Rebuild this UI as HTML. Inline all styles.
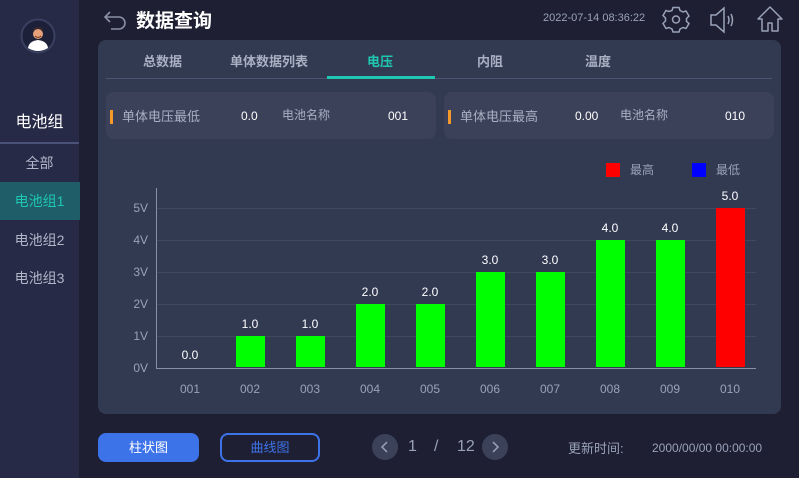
<!DOCTYPE html>
<html><head><meta charset="utf-8"><style>
*{margin:0;padding:0;box-sizing:border-box}
body{width:799px;height:478px;background:#1e1f33;font-family:"Liberation Sans","Noto Sans CJK SC",sans-serif;position:relative;overflow:hidden;color:#a9b0c4}
.a{position:absolute;white-space:nowrap}
.side{position:absolute;left:0;top:0;width:79px;height:478px;background:#262a47}
.panel{position:absolute;left:98px;top:40px;width:683px;height:374px;background:#323a52;border-radius:8px}
.card{position:absolute;top:92px;height:47px;background:#3b4159;border-radius:8px}
.grid{position:absolute;left:157px;width:599px;height:1px;background:#3f4762}
.bar{position:absolute;width:29px;background:#00ff00}
.val{position:absolute;width:60px;text-align:center;color:#fff;font-size:12px}
.xl{position:absolute;width:60px;text-align:center;font-size:12px;color:#9aa2b8;top:382px}
.yl{position:absolute;left:120px;width:28px;text-align:right;font-size:12px;color:#9aa2b8}
</style></head><body>
<div class="side"></div>
<svg class="a" style="left:20px;top:18px" width="36" height="36" viewBox="0 0 36 36">
<circle cx="18" cy="18" r="16.5" fill="#1c2038" stroke="#3a4060" stroke-width="2"/>
<path d="M8 30 Q9 23 18 22 Q27 23 28 30 Q23 33 18 33 Q13 33 8 30Z" fill="#fff"/>
<circle cx="18" cy="16" r="5" fill="#e8a07a"/>
<path d="M13 13 Q18 8 23 13 L23 11 Q18 7 13 11Z" fill="#3a2a2a"/>
<path d="M15 18 Q18 21 21 18" stroke="#6a3a2a" fill="none"/>
</svg>
<div class="a" style="left:0;width:79px;text-align:center;top:108px;font-size:16px;color:#fff">电池组</div>
<div class="a" style="left:0;top:142px;width:79px;height:2px;background:#4a5278"></div>
<div class="a" style="left:0;width:79px;text-align:center;top:153px;font-size:14px;color:#b0b6c8">全部</div>
<div class="a" style="left:0;top:182px;width:80px;height:38px;background:#1f5d68"></div>
<div class="a" style="left:0;width:79px;text-align:center;top:191px;font-size:14px;color:#1fc7b0">电池组1</div>
<div class="a" style="left:0;width:79px;text-align:center;top:230px;font-size:14px;color:#b0b6c8">电池组2</div>
<div class="a" style="left:0;width:79px;text-align:center;top:268px;font-size:14px;color:#b0b6c8">电池组3</div>

<svg class="a" style="left:102px;top:9px" width="26" height="22" viewBox="0 0 26 22"><path d="M8 3 L3 8 L8 13 M3 8 H17 A6 6 0 0 1 17 20 H9" stroke="#8a90a6" stroke-width="1.6" fill="none"/></svg>
<div class="a" style="left:136px;top:6px;font-size:19px;font-weight:bold;color:#fff">数据查询</div>
<div class="a" style="left:543px;top:12px;font-size:11px;color:#9aa2b8">2022-07-14 08:36:22</div>
<svg class="a" style="left:662px;top:6px" width="28" height="28" viewBox="0 0 28 28"><path d="M11 3h6l1 3 3 1.5 3-1 3 5-2.5 2.5v3L27 19l-3 5-3-1-3 1.5-1 3h-6l-1-3L7 23l-3 1-3-5 2.5-2.5v-3L1 11l3-5 3 1L10 6z" transform="translate(0,-1.5)" stroke="#9aa2b8" stroke-width="1.5" fill="none"/><circle cx="14" cy="13.5" r="3.5" stroke="#9aa2b8" stroke-width="1.5" fill="none"/></svg>
<svg class="a" style="left:708px;top:6px" width="30" height="28" viewBox="0 0 30 28"><path d="M3 9h5l8-7v24l-8-7H3z" stroke="#9aa2b8" stroke-width="1.5" fill="none"/><path d="M20 10q2 4 0 8M23 8q3 6 0 12" stroke="#9aa2b8" stroke-width="1.5" fill="none"/></svg>
<svg class="a" style="left:756px;top:5px" width="28" height="28" viewBox="0 0 28 28"><path d="M14 2L2 14h4v12h6v-8h4v8h6V14h4z" stroke="#9aa2b8" stroke-width="1.5" fill="none" stroke-linejoin="round"/></svg>

<div class="panel"></div>
<div class="a" style="left:106px;top:78px;width:666px;height:1px;background:#4c5472"></div>
<div class="a" style="left:327px;top:76px;width:108px;height:3px;background:#1fc7b0"></div>
<div class="a" style="left:143px;top:51px;font-size:13px;font-weight:bold;color:#a9b0c4">总数据</div>
<div class="a" style="left:230px;top:51px;font-size:13px;font-weight:bold;color:#a9b0c4">单体数据列表</div>
<div class="a" style="left:367px;top:51px;font-size:13px;font-weight:bold;color:#1fc7b0">电压</div>
<div class="a" style="left:477px;top:51px;font-size:13px;font-weight:bold;color:#a9b0c4">内阻</div>
<div class="a" style="left:585px;top:51px;font-size:13px;font-weight:bold;color:#a9b0c4">温度</div>

<div class="card" style="left:106px;width:330px"></div>
<div class="card" style="left:444px;width:330px"></div>
<div class="a" style="left:110px;top:110px;width:3px;height:14px;background:#f59a2a"></div>
<div class="a" style="left:448px;top:110px;width:3px;height:14px;background:#f59a2a"></div>
<div class="a" style="left:122px;top:106px;font-size:13px">单体电压最低</div>
<div class="a" style="left:241px;top:109px;font-size:12px;color:#fff">0.0</div>
<div class="a" style="left:282px;top:106px;font-size:12px">电池名称</div>
<div class="a" style="left:388px;top:109px;font-size:12px;color:#fff">001</div>
<div class="a" style="left:460px;top:106px;font-size:13px">单体电压最高</div>
<div class="a" style="left:575px;top:109px;font-size:12px;color:#fff">0.00</div>
<div class="a" style="left:620px;top:106px;font-size:12px">电池名称</div>
<div class="a" style="left:725px;top:109px;font-size:12px;color:#fff">010</div>

<div class="a" style="left:606px;top:163px;width:14px;height:14px;background:#f00"></div>
<div class="a" style="left:630px;top:161px;font-size:12px;color:#9aa2b8">最高</div>
<div class="a" style="left:692px;top:163px;width:14px;height:14px;background:#00f"></div>
<div class="a" style="left:716px;top:161px;font-size:12px;color:#9aa2b8">最低</div>

<div class="grid" style="top:208px"></div><div class="grid" style="top:240px"></div><div class="grid" style="top:272px"></div><div class="grid" style="top:304px"></div><div class="grid" style="top:336px"></div>
<div class="a" style="left:156px;top:188px;width:1px;height:181px;background:#8a90a6"></div>
<div class="a" style="left:156px;top:368px;width:600px;height:1px;background:#8a90a6"></div>
<div class="yl" style="top:201px">5V</div><div class="yl" style="top:233px">4V</div><div class="yl" style="top:265px">3V</div><div class="yl" style="top:297px">2V</div><div class="yl" style="top:329px">1V</div><div class="yl" style="top:361px">0V</div>

<div class="bar" style="left:236px;top:336px;height:31px"></div>
<div class="bar" style="left:296px;top:336px;height:31px"></div>
<div class="bar" style="left:356px;top:304px;height:63px"></div>
<div class="bar" style="left:416px;top:304px;height:63px"></div>
<div class="bar" style="left:476px;top:272px;height:95px"></div>
<div class="bar" style="left:536px;top:272px;height:95px"></div>
<div class="bar" style="left:596px;top:240px;height:127px"></div>
<div class="bar" style="left:656px;top:240px;height:127px"></div>
<div class="bar" style="left:716px;top:208px;height:159px;background:#f00"></div>

<div class="val" style="left:160px;top:348px">0.0</div>
<div class="val" style="left:220px;top:317px">1.0</div>
<div class="val" style="left:280px;top:317px">1.0</div>
<div class="val" style="left:340px;top:285px">2.0</div>
<div class="val" style="left:400px;top:285px">2.0</div>
<div class="val" style="left:460px;top:253px">3.0</div>
<div class="val" style="left:520px;top:253px">3.0</div>
<div class="val" style="left:580px;top:221px">4.0</div>
<div class="val" style="left:640px;top:221px">4.0</div>
<div class="val" style="left:700px;top:189px">5.0</div>

<div class="xl" style="left:160px">001</div><div class="xl" style="left:220px">002</div><div class="xl" style="left:280px">003</div><div class="xl" style="left:340px">004</div><div class="xl" style="left:400px">005</div><div class="xl" style="left:460px">006</div><div class="xl" style="left:520px">007</div><div class="xl" style="left:580px">008</div><div class="xl" style="left:640px">009</div><div class="xl" style="left:700px">010</div>

<div class="a" style="left:98px;top:433px;width:101px;height:29px;background:#3d73e8;border-radius:8px;color:#fff;font-size:13px;text-align:center;line-height:29px">柱状图</div>
<div class="a" style="left:220px;top:433px;width:100px;height:29px;border:2px solid #3d73e8;border-radius:8px;color:#3d73e8;font-size:13px;text-align:center;line-height:25px">曲线图</div>
<div class="a" style="left:372px;top:434px;width:26px;height:26px;border-radius:13px;background:#3b4159"></div>
<svg class="a" style="left:372px;top:434px" width="26" height="26"><path d="M15 8l-5 5 5 5" stroke="#9aa2b8" stroke-width="1.5" fill="none"/></svg>
<div class="a" style="left:482px;top:434px;width:26px;height:26px;border-radius:13px;background:#3b4159"></div>
<svg class="a" style="left:482px;top:434px" width="26" height="26"><path d="M11 8l5 5-5 5" stroke="#9aa2b8" stroke-width="1.5" fill="none"/></svg>
<div class="a" style="left:408px;top:438px;font-size:16px;color:#9aa2b8">1</div>
<div class="a" style="left:434px;top:438px;font-size:16px;color:#9aa2b8">/</div>
<div class="a" style="left:457px;top:438px;font-size:16px;color:#9aa2b8">12</div>
<div class="a" style="left:568px;top:438px;font-size:13px;color:#9aa2b8">更新时间:</div>
<div class="a" style="left:652px;top:441px;font-size:12px;color:#9aa2b8">2000/00/00 00:00:00</div>
</body></html>
